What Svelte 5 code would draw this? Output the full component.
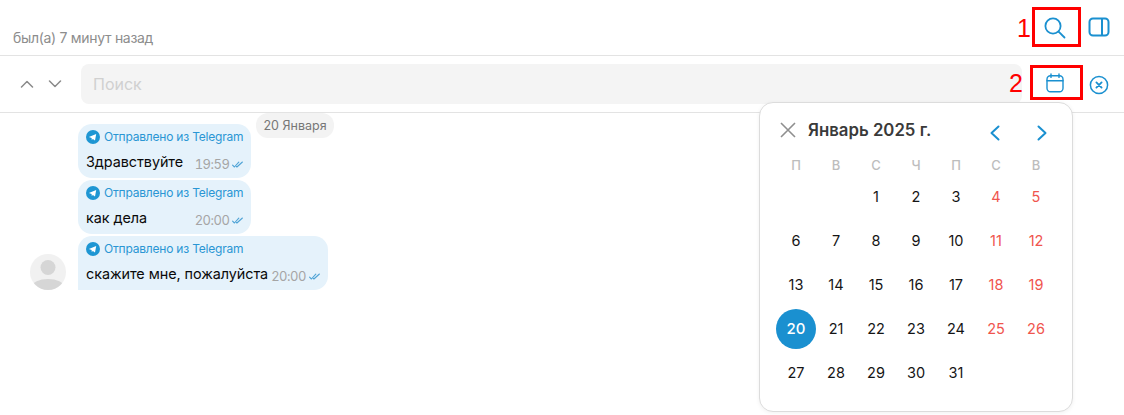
<script>
  const weekdays = ['П', 'В', 'С', 'Ч', 'П', 'С', 'В'];
  const blanks = [0, 1];
  const days = Array.from({ length: 31 }, (_, i) => i + 1);
  const weekend = (d) => d % 7 === 4 || d % 7 === 5;
  const messages = [
    { text: 'Здравствуйте', time: '19:59' },
    { text: 'как дела', time: '20:00' },
    { text: 'скажите мне, пожалуйста', time: '20:00', avatar: true }
  ];
</script>

<div class="page">
  <header class="top">
    <span class="status">был(а) 7 минут назад</span>
    <div class="top-icons">
      <svg width="22" height="22" viewBox="0 0 22 22" fill="none" stroke="#1a90d0" stroke-width="1.800" stroke-linecap="round"><circle cx="9" cy="9" r="7.600"/><path d="M14.600 14.600 20.500 20.500"/></svg>
      <svg width="22" height="20" viewBox="0 0 22 20" fill="none" stroke="#1a90d0" stroke-width="2"><rect x="1.500" y="1.500" width="19" height="17" rx="3.500"/><path d="M14 1.500v17"/></svg>
    </div>
  </header>

  <div class="search-row">
    <div class="arrows">
      <svg width="14" height="8" viewBox="0 0 14 8" fill="none" stroke="#8a8a8a" stroke-width="1.500" stroke-linecap="round" stroke-linejoin="round"><path d="M1.500 7 7 1.500 12.500 7"/></svg>
      <svg width="14" height="8" viewBox="0 0 14 8" fill="none" stroke="#8a8a8a" stroke-width="1.500" stroke-linecap="round" stroke-linejoin="round"><path d="M1.500 1 7 6.500 12.500 1"/></svg>
    </div>
    <div class="input">Поиск</div>
    <svg class="ic-cal" width="18" height="20" viewBox="0 0 18 20" fill="none" stroke="#1a90d0" stroke-width="1.400" stroke-linecap="round"><rect x="1" y="2.800" width="16" height="16" rx="3.500"/><path d="M1 7.800h16M5 1v3.400M13 1v3.400"/></svg>
    <svg class="ic-close" width="20" height="20" viewBox="0 0 20 20" fill="none" stroke="#1a90d0" stroke-width="1.500" stroke-linecap="round"><circle cx="10" cy="10" r="8.600"/><path d="M7.400 7.400l5.200 5.200M12.600 7.400l-5.200 5.200" stroke-width="1.800"/></svg>
  </div>

  <main class="chat">
    {#each messages as m}
      <div class="row">
        <div class="avatar-slot">
          {#if m.avatar}
            <svg width="36" height="36" viewBox="0 0 36 36"><defs><clipPath id="av"><circle cx="18" cy="18" r="18"/></clipPath></defs><circle cx="18" cy="18" r="18" fill="#f1f1f1"/><g clip-path="url(#av)" fill="#d6d6d6"><circle cx="18" cy="13.500" r="7.500"/><ellipse cx="18" cy="33" rx="16" ry="8"/></g></svg>
          {/if}
        </div>
        <div class="bubble" class:last={m.avatar}>
          <div class="source">
            <svg width="14" height="14" viewBox="0 0 14 14"><circle cx="7" cy="7" r="7" fill="#1e96d3"/><path d="M2.900 6.900 10.200 4 9 10.400 6.900 8.900 5.800 10l-.2-2z" fill="#fff"/></svg>
            <span>Отправлено из Telegram</span>
          </div>
          <div class="body">
            <span class="text">{m.text}</span>
            <span class="meta">
              <span class="time">{m.time}</span>
              <svg width="11" height="7" viewBox="0 0 11 7" fill="none" stroke="#4fa3d6" stroke-width="1.100" stroke-linecap="round" stroke-linejoin="round"><path d="M.6 4.200 2.400 6 6.800 1.200M4.400 5.500l.5.500L10.400 1"/></svg>
            </span>
          </div>
        </div>
      </div>
    {/each}
    <div class="date-pill">20 Января</div>
  </main>

  <section class="calendar">
    <div class="cal-head">
      <svg class="cal-x" width="16" height="16" viewBox="0 0 16 16" fill="none" stroke="#8f8f8f" stroke-width="1.600"><path d="M1 1l14 14M15 1 1 15"/></svg>
      <span class="month">Январь 2025 г.</span>
      <svg class="prev" width="11" height="16" viewBox="0 0 11 16" fill="none" stroke="#1a90d0" stroke-width="2" stroke-linecap="round" stroke-linejoin="round"><path d="M9.500 1.500 2.500 8l7 6.500"/></svg>
      <svg class="next" width="11" height="16" viewBox="0 0 11 16" fill="none" stroke="#1a90d0" stroke-width="2" stroke-linecap="round" stroke-linejoin="round"><path d="M1.500 1.500 8.500 8l-7 6.500"/></svg>
    </div>
    <div class="weekdays">
      {#each weekdays as w}<span>{w}</span>{/each}
    </div>
    <div class="grid">
      {#each blanks as b}<span></span>{/each}
      {#each days as d}
        <span class="day" class:red={weekend(d)} class:sel={d === 20}>{d}</span>
      {/each}
    </div>
  </section>

  <div class="mark box1"></div>
  <div class="mark box2"></div>
  <span class="num n1">1</span>
  <span class="num n2">2</span>
</div>

<style>
  :global(body) { margin: 0; background: #fff; }
  .page {
    position: relative;
    width: 1124px;
    height: 415px;
    overflow: hidden;
    font-family: Inter, "Noto Sans", sans-serif;
    color: #000;
  }
  .top {
    height: 55px;
    border-bottom: 1px solid #e3e3e3;
    display: flex;
    align-items: flex-end;
    justify-content: space-between;
    padding-left: 13px;
  }
  .status { font-size: 14px; letter-spacing: -0.3px; color: #8d8d8d; line-height: 17px; margin-bottom: 9px; }
  .top-icons { display: flex; gap: 22px; align-items: flex-start; align-self: flex-start; margin-top: 17px; padding-right: 14px; }
  .search-row {
    height: 56px;
    border-bottom: 1px solid #e3e3e3;
    display: flex;
    align-items: center;
  }
  .arrows { width: 81px; display: flex; gap: 14px; padding-left: 20px; box-sizing: border-box; }
  .input {
    width: 941px;
    height: 40px;
    background: #f4f4f4;
    border-radius: 8px;
    padding-left: 12px;
    box-sizing: border-box;
    font-size: 16px;
    line-height: 40px;
    color: #d0d0d0;
  }
  .ic-cal { margin-left: 24px; margin-top: -2px; }
  .ic-close { margin-left: 25px; margin-top: 2px; }

  .chat {
    position: relative;
    padding-top: 11px;
    display: flex;
    flex-direction: column;
    gap: 2px;
  }
  .row { display: flex; align-items: flex-end; }
  .avatar-slot { width: 30px; padding-left: 30px; margin-right: 18px; height: 36px; }
  .bubble {
    background: #e5f2fb;
    border-radius: 14px;
    padding: 5px 8px 0;
    height: 54px;
    box-sizing: border-box;
  }
  .bubble.last { border-bottom-left-radius: 0; }
  .source {
    display: flex;
    align-items: center;
    gap: 4px;
    font-size: 12px;
    line-height: 15px;
    color: #2a96d4;
    letter-spacing: -0.2px;
  }
  .body {
    display: flex;
    justify-content: space-between;
    align-items: flex-end;
    margin-top: 8px;
  }
  .text { font-size: 14.400px; letter-spacing: -0.06px; line-height: 20px; color: #0a0a0a; }
  .meta { display: flex; align-items: center; gap: 3px; margin-left: 3px; }
  .time { font-size: 13px; letter-spacing: -0.5px; font-variant-numeric: tabular-nums; line-height: 16px; color: #a5a5a5; }
  .date-pill {
    position: absolute;
    left: 256px;
    top: 0;
    width: 78px;
    height: 25px;
    box-sizing: border-box;
    border-radius: 12px;
    background: #f3f3f3;
    text-align: center;
    font-size: 12.500px;
    line-height: 25px;
    color: #777;
  }

  .calendar {
    position: absolute;
    left: 759px;
    top: 102px;
    width: 314px;
    height: 310px;
    box-sizing: border-box;
    background: #fff;
    border: 1px solid #dcdcdc;
    border-radius: 14px;
    box-shadow: 0 1px 4px rgba(0,0,0,.06);
    padding: 0 16px;
  }
  .cal-head { height: 49px; padding-top: 5px; box-sizing: border-box; display: flex; align-items: center; position: relative; }
  .cal-x { margin-left: 4px; }
  .month { margin-left: 12px; font-size: 16.800px; font-weight: 600; color: #3a3a3a; }
  .prev { position: absolute; left: 213px; top: 22px; }
  .next { position: absolute; left: 261px; top: 22px; }
  .weekdays { display: grid; grid-template-columns: repeat(7, 40px); height: 23px; padding-top: 1px; }
  .weekdays span { text-align: center; font-size: 13px; line-height: 24px; color: #bdbdbd; font-weight: 500; }
  .grid { display: grid; grid-template-columns: repeat(7, 40px); grid-auto-rows: 44px; margin-top: -1px; }
  .day {
    display: flex;
    align-items: center;
    justify-content: center;
    font-size: 14.500px;
    color: #151515;
    border-radius: 50%;
    height: 40px;
    box-sizing: border-box;
    padding-bottom: 1px;
    align-self: center;
  }
  .day.red { color: #f0554e; }
  .day.sel { background: #1a90d0; color: #fff; font-weight: 500; font-size: 15px; }

  .mark { position: absolute; border: 3px solid #f00; box-sizing: border-box; }
  .box1 { left: 1032px; top: 7px; width: 49px; height: 40px; }
  .box2 { left: 1030px; top: 65px; width: 53px; height: 35px; }
  .num { position: absolute; color: #f00; font-size: 25px; line-height: 28px; font-family: "Liberation Sans", sans-serif; }
  .n1 { left: 1017px; top: 14px; }
  .n2 { left: 1009px; top: 69px; }
</style>
